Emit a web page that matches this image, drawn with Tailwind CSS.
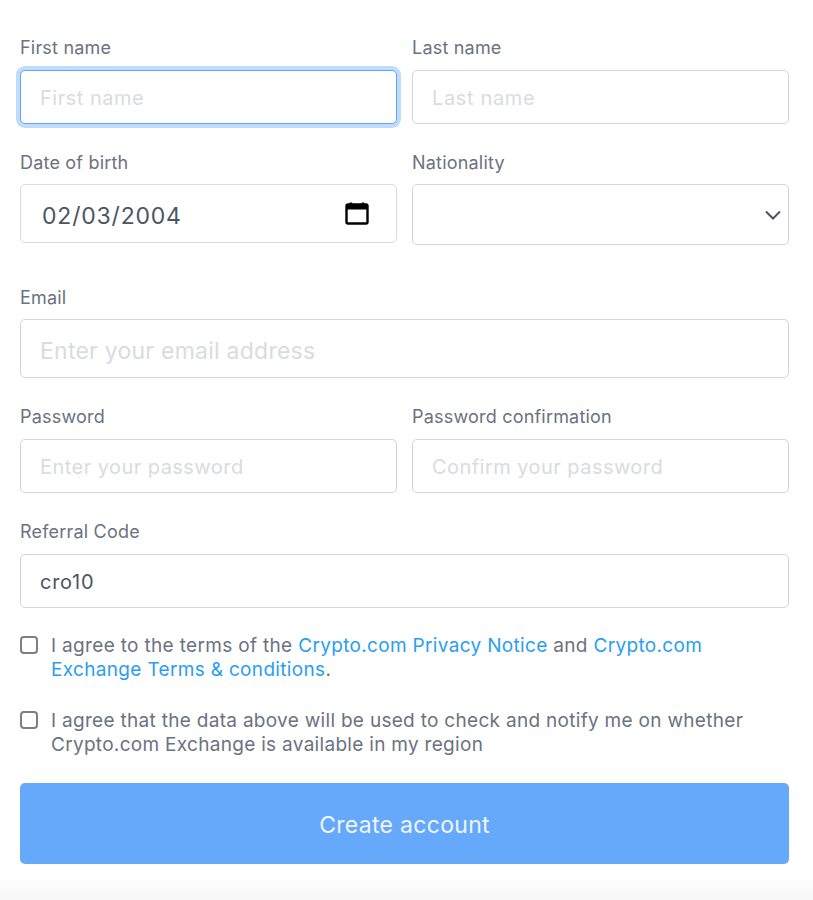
<!DOCTYPE html>
<html lang="en">
<head>
<meta charset="utf-8">
<script src="https://cdn.jsdelivr.net/npm/@tailwindcss/browser@4"></script>
<title>Create account</title>
</head>
<body class="bg-white">
<div class="relative h-[900px] w-[813px] overflow-hidden bg-gradient-to-b from-white from-[97%] to-[#f8f8f8] pl-[20px] pr-[24px] pt-[37px] font-['Inter',sans-serif] text-[#6b7280]">
  <form class="flex flex-col">
    <div class="grid grid-cols-2 gap-x-[15px]">
      <div>
        <label class="block h-[20px] pt-[1px] text-[18px] leading-[20px] tracking-[0.2px]">First name</label>
        <input placeholder="First name" class="mt-[13px] block h-[54px] w-full rounded-[5px] border border-[#60a5fa] bg-white px-[19px] pt-[1px] text-[20px] tracking-[0.5px] shadow-[0_0_0_4px_#bfdbfe] outline-none placeholder:text-[#d9dbe3]">
      </div>
      <div>
        <label class="block h-[20px] pt-[1px] text-[18px] leading-[20px] tracking-[0.2px]">Last name</label>
        <input placeholder="Last name" class="mt-[13px] block h-[54px] w-full rounded-[5px] border border-[#d1d5db] bg-white px-[19px] pt-[1px] text-[20px] tracking-[0.65px] outline-none placeholder:text-[#d9dbe3]">
      </div>
    </div>
    <div class="mt-[28px] grid grid-cols-2 gap-x-[15px]">
      <div>
        <label class="block h-[20px] pt-[1px] text-[18px] leading-[20px] tracking-[0.2px]">Date of birth</label>
        <div class="mt-[12px] flex h-[59px] items-center justify-between rounded-[5px] border border-[#d9dbe3] bg-white pl-[21px] pr-[26px]">
          <span class="pt-[6px] text-[23px] tracking-[0.8px] text-[#4b5563]">02/03/2004</span>
          <svg width="26" height="26" viewBox="0 0 26 26" fill="none" class="mb-[2px] text-black"><path d="M7 2.500v3M19 2.500v3" stroke="currentColor" stroke-width="2.500"/><rect x="2.500" y="4.500" width="21" height="19" rx="1.500" stroke="currentColor" stroke-width="2.400"/><path d="M2.500 5h21v4.500h-21z" fill="currentColor"/></svg>
        </div>
      </div>
      <div>
        <label class="block h-[20px] pt-[1px] text-[18px] leading-[20px] tracking-[0.2px]">Nationality</label>
        <div class="mt-[12px] flex h-[61px] items-center justify-end rounded-[5px] border border-[#d1d5db] bg-white pr-[6px]">
          <svg width="18" height="12" viewBox="0 0 18 12" fill="none"><path d="M2 2.500 9 9.500 16 2.500" stroke="#4b5563" stroke-width="2"/></svg>
        </div>
      </div>
    </div>
    <div class="mt-[42px]">
      <label class="block h-[20px] pt-[1px] text-[18px] leading-[20px] tracking-[0.2px]">Email</label>
      <input placeholder="Enter your email address" class="mt-[12px] block h-[59px] w-full rounded-[5px] border border-[#d1d5db] bg-white px-[19px] pt-[4px] text-[23px] tracking-[0.25px] outline-none placeholder:text-[#d9dbe3]">
    </div>
    <div class="mt-[28px] grid grid-cols-2 gap-x-[15px]">
      <div>
        <label class="block h-[20px] pt-[1px] text-[18px] leading-[20px] tracking-[0.2px]">Password</label>
        <input placeholder="Enter your password" class="mt-[13px] block h-[54px] w-full rounded-[5px] border border-[#d1d5db] bg-white px-[19px] pt-[1px] text-[20px] tracking-[0.45px] outline-none placeholder:text-[#d9dbe3]">
      </div>
      <div>
        <label class="block h-[20px] pt-[1px] text-[18px] leading-[20px] tracking-[0.2px]">Password confirmation</label>
        <input placeholder="Confirm your password" class="mt-[13px] block h-[54px] w-full rounded-[5px] border border-[#d1d5db] bg-white px-[19px] pt-[1px] text-[20px] tracking-[0.45px] outline-none placeholder:text-[#d9dbe3]">
      </div>
    </div>
    <div class="mt-[28px]">
      <label class="block h-[20px] pt-[1px] text-[18px] leading-[20px] tracking-[0.2px]">Referral Code</label>
      <input value="cro10" class="mt-[13px] block h-[54px] w-full rounded-[5px] border border-[#d1d5db] bg-white px-[19px] pt-[1px] text-[20px] tracking-[0.7px] text-[#4b5563] outline-none">
    </div>
    <div class="mt-[26px] flex gap-[13px] text-[19px] leading-[24px] tracking-[0.33px]">
      <span class="mt-[2px] h-[18px] w-[18px] shrink-0 rounded-[4px] border-2 border-[#7f7f7f] bg-white"></span>
      <p>I agree to the terms of the <a class="text-[#2a9df4]">Crypto.com Privacy Notice</a> and <a class="text-[#2a9df4]">Crypto.com Exchange Terms &amp; conditions</a>.</p>
    </div>
    <div class="mt-[27px] flex gap-[13px] text-[19px] leading-[24px] tracking-[0.3px]">
      <span class="mt-[2px] h-[18px] w-[18px] shrink-0 rounded-[4px] border-2 border-[#7f7f7f] bg-white"></span>
      <p>I agree that the data above will be used to check and notify me on whether Crypto.com Exchange is available in my region</p>
    </div>
    <button type="button" class="mt-[26px] h-[81px] w-full rounded-[5px] bg-[#66a9fb] pt-[3px] text-[23px] tracking-[0.3px] text-[#eef5ff]">Create account</button>
  </form>
</div>
</body>
</html>
